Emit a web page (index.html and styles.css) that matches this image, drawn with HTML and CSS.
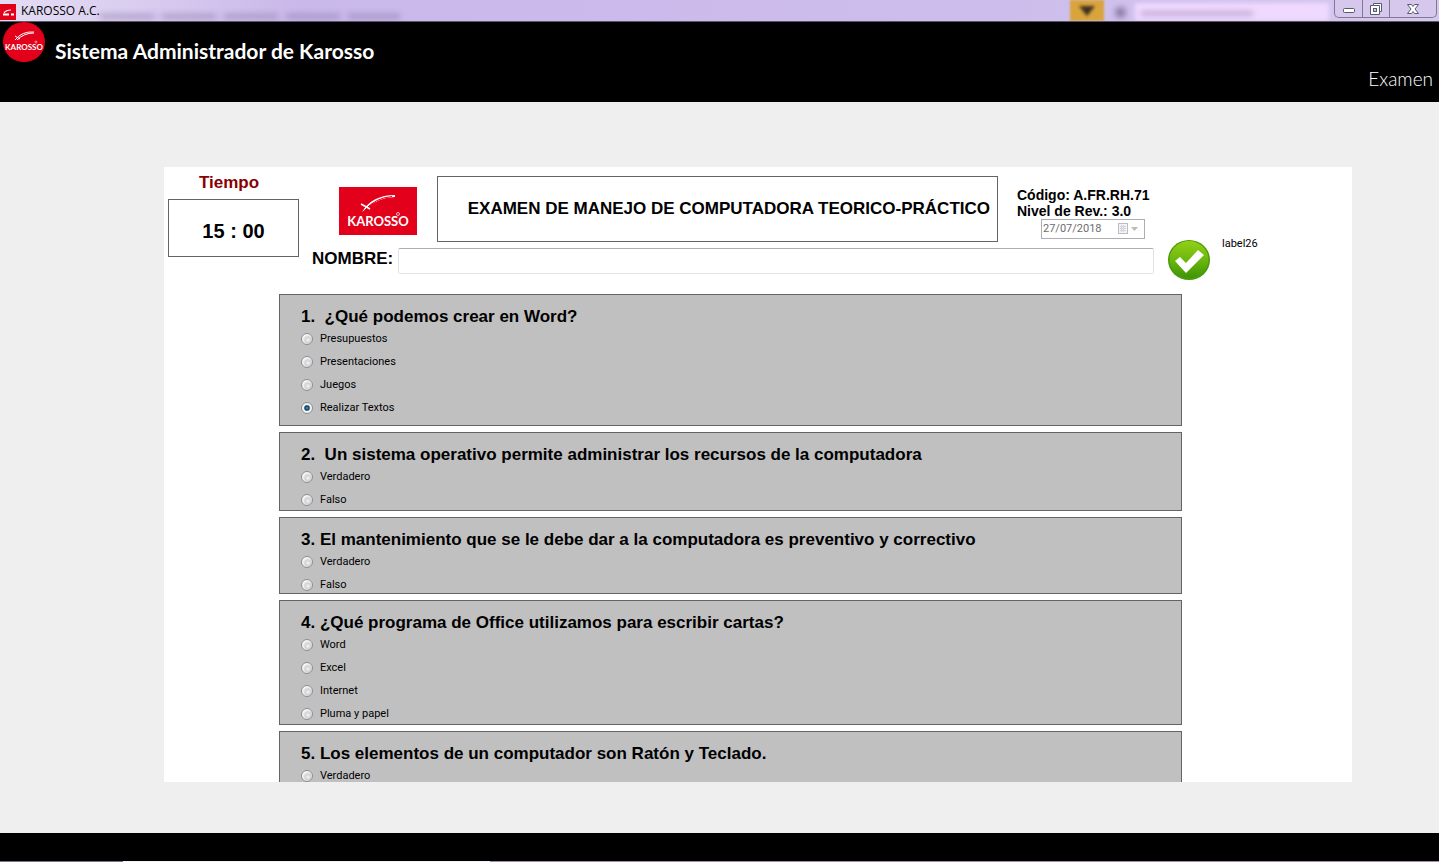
FILE: index.html
```html
<!DOCTYPE html>
<html lang="es">
<head>
<meta charset="utf-8">
<title>KAROSSO A.C.</title>
<link rel="stylesheet" href="styles.css">
</head>
<body>
<div class="titlebar">
  <svg class="app-icon" viewBox="0 0 16 16" aria-hidden="true"><rect width="16" height="16" fill="#e2001a"/><path d="M4 9Q6 6 11 6" stroke="#fff" stroke-width="1.200" fill="none"/><path d="M3 10.500h6M11 10.500h3" stroke="#fff" stroke-width="2"/></svg>
  <span class="window-title">KAROSSO A.C.</span>
  <div class="glass" aria-hidden="true">
    <span class="smudge"></span>
    <span class="flag"></span>
    <span class="mark"></span>
    <span class="quick"></span>
  </div>
  <div class="window-buttons">
    <button type="button" aria-label="Minimizar"><svg width="14" height="14" viewBox="0 0 14 14"><rect x="1.500" y="6.500" width="11" height="4" rx="1" fill="#fff" stroke="#555b6e"/></svg></button>
    <button type="button" aria-label="Restaurar"><svg width="14" height="14" viewBox="0 0 14 14"><path d="M4.500 1.500h8v8h-2v3h-9v-9h3z" fill="#fff" stroke="#555b6e"/><path d="M4.500 3.500h6v6" fill="none" stroke="#555b6e"/><rect x="4.500" y="6.500" width="3" height="3" fill="#d5c8ec" stroke="#555b6e"/></svg></button>
    <button type="button" class="close" aria-label="Cerrar"><svg width="14" height="14" viewBox="0 0 14 14"><path d="M1.500 2.500h4L7 4.500l1.500-2h4L9 7l3.500 4.500h-4L7 9.500l-1.500 2h-4L5 7z" fill="#fff" stroke="#555b6e"/></svg></button>
  </div>
</div>

<header class="banner">
  <svg class="brand" viewBox="0 0 42 40" role="img" aria-label="Karosso"><ellipse cx="21" cy="20" rx="21" ry="20" fill="#e2001a"/><path d="M12 18Q19 9 31 10M14 18Q21 11 31 11" stroke="#fff" fill="none"/><path d="M12 14l5 3" stroke="#fff"/><circle cx="33" cy="20" r="1" fill="none" stroke="#fff" stroke-width=".5"/><text x="21" y="28" text-anchor="middle" class="brand-text">KAROSSO</text></svg>
  <h1>Sistema Administrador de Karosso</h1>
  <a class="section-link" href="#examen">Examen</a>
</header>

<main>
  <form class="panel" id="examen">
    <div class="panel-head">
      <section class="timer">
        <h2>Tiempo</h2>
        <output class="clock">15 : 00</output>
      </section>
      <div class="sheet">
        <div class="sheet-top">
          <svg class="logo" viewBox="0 0 78 48" role="img" aria-label="Karosso"><rect width="78" height="48" fill="#e2001a"/><path d="M23 25Q33 8 56 8L56 10Q38 11 28 21Z" fill="#fff"/><path d="M26 23Q36 11 53 9.500" stroke="#e2001a" fill="none"/><path d="M22 17l9 5" stroke="#fff" stroke-width="1.500"/><circle cx="59" cy="27" r="1.500" fill="none" stroke="#fff" stroke-width=".7"/><text x="39" y="39" text-anchor="middle" class="logo-text">KAROSSO</text></svg>
          <h2 class="exam-title">EXAMEN DE MANEJO DE COMPUTADORA TEORICO-PRÁCTICO</h2>
          <div class="code">
            <p>Código: A.FR.RH.71</p>
            <p>Nivel de Rev.: 3.0</p>
            <div class="date">
              <input type="text" value="27/07/2018" aria-label="Fecha" disabled>
              <svg width="22" height="14" viewBox="0 0 22 14" aria-hidden="true"><rect x="1.500" y="1.500" width="9" height="10" fill="#f4f4f8" stroke="#bbbbc4"/><path d="M3 4.500h6M3 6.500h6M3 8.500h6M4.500 3v7M6.500 3v7" stroke="#d4d4de"/><path d="M14 5h7l-3.500 4z" fill="#b9beb4"/></svg>
            </div>
          </div>
        </div>
        <div class="name-row">
          <label for="nombre">NOMBRE:</label>
          <input id="nombre" type="text">
        </div>
      </div>
      <button type="button" class="accept" aria-label="Aceptar"><svg viewBox="0 0 42 40"><defs><linearGradient id="green" x1="0" y1="0" x2="0" y2="1"><stop offset="0" stop-color="#93cf16"/><stop offset=".5" stop-color="#6db80e"/><stop offset="1" stop-color="#3f9406"/></linearGradient></defs><ellipse cx="21" cy="20" rx="21" ry="20" fill="#4b9a0b"/><ellipse cx="21" cy="19.500" rx="19.500" ry="18.500" fill="url(#green)"/><path d="M7 21l5-4 6 6L30 10l6 5L18 33z" fill="#fff"/></svg></button>
      <span class="side-label">label26</span>
    </div>

    <div class="questions">
      <fieldset class="card roomy">
        <legend>1.&nbsp; ¿Qué podemos crear en Word?</legend>
        <label><input type="radio" name="q1">Presupuestos</label>
        <label><input type="radio" name="q1">Presentaciones</label>
        <label><input type="radio" name="q1">Juegos</label>
        <label><input type="radio" name="q1" checked>Realizar Textos</label>
      </fieldset>
      <fieldset class="card">
        <legend>2.&nbsp; Un sistema operativo permite administrar los recursos de la computadora</legend>
        <label><input type="radio" name="q2">Verdadero</label>
        <label><input type="radio" name="q2">Falso</label>
      </fieldset>
      <fieldset class="card tight">
        <legend>3. El mantenimiento que se le debe dar a la computadora es preventivo y correctivo</legend>
        <label><input type="radio" name="q3">Verdadero</label>
        <label><input type="radio" name="q3">Falso</label>
      </fieldset>
      <fieldset class="card">
        <legend>4. ¿Qué programa de Office utilizamos para escribir cartas?</legend>
        <label><input type="radio" name="q4">Word</label>
        <label><input type="radio" name="q4">Excel</label>
        <label><input type="radio" name="q4">Internet</label>
        <label><input type="radio" name="q4">Pluma y papel</label>
      </fieldset>
      <fieldset class="card roomy">
        <legend>5. Los elementos de un computador son Ratón y Teclado.</legend>
        <label><input type="radio" name="q5">Verdadero</label>
      </fieldset>
    </div>
  </form>
</main>
<footer></footer>
</body>
</html>
```
FILE: styles.css
```css
* { box-sizing: border-box; }
body {
  margin: 0;
  height: 100vh;
  display: flex;
  flex-direction: column;
  background: #efefef;
  color: #000;
  font: 11px/16px Roboto, "Liberation Sans", sans-serif;
}
h1, h2, p { margin: 0; }
button { border: 0; padding: 0; background: none; }

.titlebar {
  position: relative;
  flex: none;
  height: 22px;
  display: flex;
  align-items: center;
  background: linear-gradient(90deg, #e4dcf4 0, #dcd0f0 110px, #c9b8ea 300px, #cdbdec 70%, #d5c8ee);
  border-bottom: 1px solid #5c5468;
  overflow: hidden;
}
.app-icon { width: 16px; height: 16px; margin-top: 2px; }
.window-title { margin-left: 5px; font: 12px/16px "Open Sans", sans-serif; z-index: 1; }
.glass span { position: absolute; }
.smudge { left: 100px; top: 14px; width: 300px; height: 5px; background: repeating-linear-gradient(90deg, #8a7ca8 0 52px, #c9b8ea 56px 62px); opacity: .6; filter: blur(3px); }
.flag { right: 335px; top: 0; width: 34px; height: 21px; background: #d9a43c; filter: blur(1px); }
.flag::after { content: ""; position: absolute; left: 9px; top: 6px; border: 8px solid transparent; border-top: 10px solid #3c3020; border-bottom: 0; filter: blur(1px); }
.mark { right: 314px; top: 8px; width: 9px; height: 9px; background: #5c5070; opacity: .7; filter: blur(3px); }
.quick { right: 110px; top: 3px; width: 194px; height: 18px; background: #efd9ff; filter: blur(2px); }
.quick::after { content: ""; position: absolute; left: 6px; top: 9px; width: 112px; height: 3px; background: #a890bc; filter: blur(2px); }
.window-buttons {
  position: relative;
  align-self: flex-start;
  margin: 0 2px 0 auto;
  display: flex;
  height: 18px;
  border: 1px solid #82798f;
  border-top: 0;
  border-radius: 0 0 5px 5px;
  background: #d5c8ec;
}
.window-buttons button { width: 27px; display: flex; justify-content: center; align-items: center; }
.window-buttons button + button { border-left: 1px solid #82798f; }
.window-buttons .close { width: 47px; }

.banner {
  flex: none;
  display: flex;
  align-items: flex-start;
  height: 80px;
  padding: 0 6px 0 3px;
  background: #000;
  color: #fff;
}
.brand { width: 42px; height: 40px; }
.brand-text { font: bold 8px Lato, sans-serif; fill: #fff; }
.banner h1 { margin: 17px 0 0 10px; font: bold 21px/24px Lato, sans-serif; }
.section-link { margin: 45px 0 0 auto; color: #fff; text-decoration: none; font: 300 19px/24px Lato, sans-serif; }

main { flex: 1; min-height: 0; display: flex; padding: 65px 87px 51px 164px; }
.panel { flex: 1; min-width: 0; overflow: hidden; background: #fff; }
.panel-head { display: flex; padding: 4px 95px 0 4px; }
.timer { width: 131px; text-align: center; }
.timer h2 { margin-right: 9px; color: #8b0000; font: bold 17px/24px "Liberation Sans", Arial, sans-serif; }
.clock { display: flex; align-items: center; justify-content: center; height: 58px; margin-top: 4px; padding-top: 6px; border: 1px solid #646464; font: bold 20px/24px "Liberation Sans", Arial, sans-serif; }
.sheet { flex: 1; min-width: 0; margin-left: 13px; padding-top: 5px; }
.sheet-top { display: flex; align-items: flex-start; }
.logo { flex: none; width: 78px; height: 48px; margin: 11px 20px 0 27px; }
.logo-text { font: bold 13px Lato, sans-serif; fill: #fff; }
.exam-title {
  flex: 1;
  min-width: 0;
  height: 66px;
  padding-right: 7px;
  border: 1px solid #646464;
  text-align: right;
  white-space: nowrap;
  font: bold 17px/64px "Liberation Sans", Arial, sans-serif;
}
.code { width: 137px; margin: 11px 0 0 19px; font: bold 14px/16px "Liberation Sans", Arial, sans-serif; white-space: nowrap; }
.date { display: flex; align-items: center; width: 104px; height: 20px; margin-left: 24px; border: 1px solid #adadb5; }
.date input { flex: 1; min-width: 0; padding: 0 0 0 1px; border: 0; background: none; color: #6d6d6d; font: 11px/16px Roboto, sans-serif; }
.date svg { margin-right: 5px; }
.name-row { display: flex; align-items: center; margin-top: 6px; }
.name-row label { width: 86px; margin-bottom: 4px; font: bold 17px/20px "Liberation Sans", Arial, sans-serif; }
.name-row input { flex: 1; min-width: 0; height: 26px; padding: 2px 4px; border: 1px solid #e2e3ea; border-top-color: #abadb3; border-radius: 2px; }
.accept { width: 42px; height: 40px; margin: 69px 0 0 14px; }
.accept svg { display: block; }
.side-label { width: 35px; margin: 65px 0 0 12px; }

.questions { display: flex; flex-direction: column; gap: 6px; padding: 14px 170px 0 115px; }
.card {
  display: flex;
  flex-direction: column;
  gap: 7px;
  min-width: 0;
  margin: 0;
  padding: 12px 21px 2px;
  border: 1px solid #646464;
  background: #c0c0c0;
}
.card legend { float: left; padding: 0; margin-bottom: -3px; font: bold 17px/20px "Liberation Sans", Arial, sans-serif; }
.card label { display: flex; align-items: center; height: 16px; }
.roomy { padding-bottom: 9px; }
.tight { padding-bottom: 0; }
.card input {
  appearance: none;
  width: 12px;
  height: 12px;
  margin: 0 7px 0 0;
  border: 1px solid #8e8f8f;
  border-radius: 50%;
  background: radial-gradient(circle at 60% 60%, #f4f4f4 0, #cfd2d6 35%, #f6f6f6 60%);
}
.card input:checked { background: radial-gradient(circle at 50% 50%, #3fa6d8 0, #123a5c 30%, #f2f2f2 50%); }

footer {
  flex: none;
  height: 29px;
  background: linear-gradient(90deg, #7c7088 0 123px, #f4f2f6 123px 490px, #a08cac 490px) bottom / 100% 1px no-repeat #000;
}
```
